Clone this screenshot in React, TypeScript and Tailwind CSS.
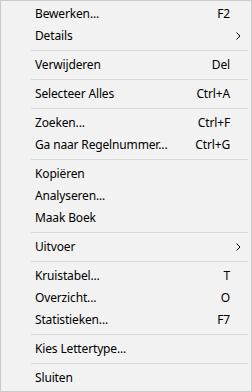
import React from 'react';

type Entry =
  | { kind: 'item'; label: string; shortcut?: string; submenu?: boolean }
  | { kind: 'sep' };

const MENU: Entry[] = [
  { kind: 'item', label: 'Bewerken...', shortcut: 'F2' },
  { kind: 'item', label: 'Details', submenu: true },
  { kind: 'sep' },
  { kind: 'item', label: 'Verwijderen', shortcut: 'Del' },
  { kind: 'sep' },
  { kind: 'item', label: 'Selecteer Alles', shortcut: 'Ctrl+A' },
  { kind: 'sep' },
  { kind: 'item', label: 'Zoeken...', shortcut: 'Ctrl+F' },
  { kind: 'item', label: 'Ga naar Regelnummer...', shortcut: 'Ctrl+G' },
  { kind: 'sep' },
  { kind: 'item', label: 'Kopiëren' },
  { kind: 'item', label: 'Analyseren...' },
  { kind: 'item', label: 'Maak Boek' },
  { kind: 'sep' },
  { kind: 'item', label: 'Uitvoer', submenu: true },
  { kind: 'sep' },
  { kind: 'item', label: 'Kruistabel...', shortcut: 'T' },
  { kind: 'item', label: 'Overzicht...', shortcut: 'O' },
  { kind: 'item', label: 'Statistieken...', shortcut: 'F7' },
  { kind: 'sep' },
  { kind: 'item', label: 'Kies Lettertype...' },
  { kind: 'sep' },
  { kind: 'item', label: 'Sluiten' },
];

function Chevron() {
  return (
    <svg width="5" height="8" viewBox="0 0 5 8" className="block">
      <path d="M0.5 0.5 L4 4 L0.5 7.5" fill="none" stroke="#000" strokeWidth="1" />
    </svg>
  );
}

export default function App() {
  return (
    <div
      className="w-[252px] h-[392px] border border-[#cccccc] bg-[#f2f2f2] py-[2px] text-[12px] text-black tracking-[-0.15px] box-border"
      style={{ fontFamily: '"Noto Sans", "Open Sans", sans-serif' }}
    >
      {MENU.map((entry, i) =>
        entry.kind === 'sep' ? (
          <div key={i} className="h-[7px] pt-[3px] pl-[30px] pr-[3px]">
            <div className="h-px bg-[#d7d7d7]" />
          </div>
        ) : (
          <div key={i} className="h-[22px] flex items-center">
            <span className="flex-1 pl-[34px] leading-none">{entry.label}</span>
            {entry.shortcut && <span className="leading-none">{entry.shortcut}</span>}
            <span className="w-[21px] pl-[6px] flex items-center">
              {entry.submenu && <Chevron />}
            </span>
          </div>
        )
      )}
    </div>
  );
}
